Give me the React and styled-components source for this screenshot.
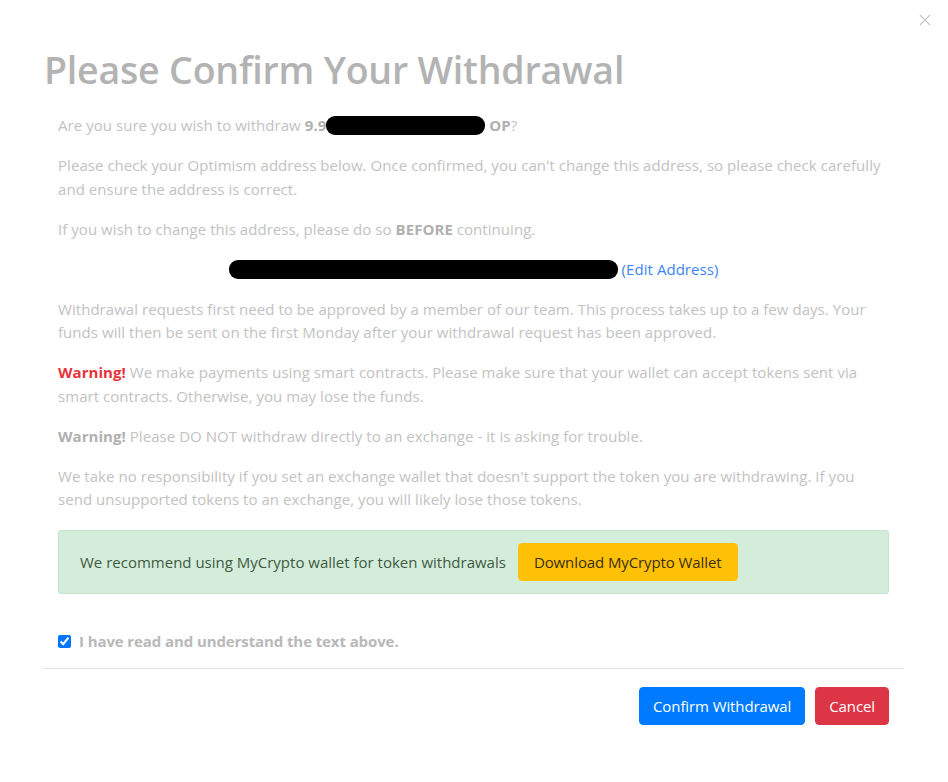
import React, { useState } from 'react'
import styled, { createGlobalStyle } from 'styled-components'

const GlobalStyle = createGlobalStyle`
  body {
    margin: 0;
    background: #ffffff;
    font-family: "Open Sans", "Noto Sans", sans-serif;
  }
`

const Page = styled.div`
  width: 948px;
  height: 782px;
  overflow: hidden;
  display: flex;
  justify-content: flex-start;
  padding: 0 0 0 43px;
  box-sizing: border-box;
  position: relative;
`

const Modal = styled.div`
  width: 861px;
  display: flex;
  flex-direction: column;
`

const CloseButton = styled.button`
  position: absolute;
  top: 12px;
  right: 14px;
  width: 18px;
  height: 18px;
  padding: 0;
  border: none;
  background: none;
  color: #c8c8c8;
  cursor: pointer;
`

const Header = styled.div`
  padding: 44px 0 0 1px;
`

const Title = styled.h1`
  margin: 0;
  font-size: 37.5px;
  font-weight: 600;
  line-height: 52px;
  color: #b3b3b3;
  letter-spacing: -0.2px;
`

const Body = styled.div`
  padding: 18px 15px 0;
`

const Text = styled.p`
  margin: 0 0 16.5px;
  font-size: 15px;
  line-height: 23.5px;
  color: #c2c2c2;
  letter-spacing: 0.05px;
  text-align: ${(p) => (p.$center ? 'center' : 'left')};
`

const Strong = styled.b`
  font-weight: 700;
  color: ${(p) => p.$color || '#b0b0b0'};
`

const Redacted = styled.span`
  display: inline-block;
  vertical-align: -4px;
  width: ${(p) => p.$w}px;
  height: 19px;
  background: #000;
  border-radius: 9px;
  margin-right: ${(p) => p.$gap || 0}px;
`

const Link = styled.a`
  color: #3d85f5;
  text-decoration: none;
  cursor: pointer;
`

const Alert = styled.div`
  display: flex;
  align-items: center;
  gap: 12px;
  height: 64px;
  margin-top: 18.5px;
  padding: 0 21px;
  box-sizing: border-box;
  background: #d4edda;
  border: 1px solid #c3e6cb;
  border-radius: 3px;
  color: #3f5a45;
  font-size: 15px;
`

const Button = styled.button`
  height: 38px;
  padding: 0 ${(p) => p.$pad || 13}px;
  border: 1px solid ${(p) => p.$bg};
  border-radius: 4px;
  background: ${(p) => p.$bg};
  color: ${(p) => p.$fg};
  font-family: inherit;
  font-size: 15px;
  letter-spacing: -0.1px;
  cursor: pointer;
`

const CheckRow = styled.label`
  display: flex;
  align-items: center;
  gap: 8px;
  margin: 37px 0 17px;
  font-size: 15px;
  font-weight: 700;
  color: #b8b8b8;
  letter-spacing: -0.1px;
  cursor: pointer;

  input {
    margin: 0;
    width: 13px;
    height: 13px;
    accent-color: #0075ff;
  }
`

const Divider = styled.hr`
  margin: 0;
  border: none;
  border-top: 1px solid #e2e2e2;
`

const Footer = styled.div`
  display: flex;
  justify-content: flex-end;
  gap: 10px;
  padding: 18px 15px 0;
`

export default function App() {
  const [agreed, setAgreed] = useState(true)

  return (
    <Page>
      <GlobalStyle />
      <CloseButton aria-label="Close">
        <svg width="14" height="14" viewBox="0 0 14 14">
          <path d="M2 2 L12 12 M12 2 L2 12" stroke="currentColor" strokeWidth="1.3" />
        </svg>
      </CloseButton>
      <Modal>
        <Header>
          <Title>Please Confirm Your Withdrawal</Title>
        </Header>
        <Body>
          <Text>
            Are you sure you wish to withdraw <Strong>9.9</Strong>
            <Redacted $w={159} $gap={4} />
            <Strong>OP</Strong>?
          </Text>
          <Text>
            Please check your Optimism address below. Once confirmed, you can't change this address, so please check carefully
            <br />
            and ensure the address is correct.
          </Text>
          <Text>
            If you wish to change this address, please do so <Strong>BEFORE</Strong> continuing.
          </Text>
          <Text $center>
            <Redacted $w={389} $gap={4} />
            <Link>(Edit Address)</Link>
          </Text>
          <Text>
            Withdrawal requests first need to be approved by a member of our team. This process takes up to a few days. Your
            <br />
            funds will then be sent on the first Monday after your withdrawal request has been approved.
          </Text>
          <Text>
            <Strong $color="#e8333c">Warning!</Strong> We make payments using smart contracts. Please make sure that your wallet can accept tokens sent via
            <br />
            smart contracts. Otherwise, you may lose the funds.
          </Text>
          <Text>
            <Strong>Warning!</Strong> Please DO NOT withdraw directly to an exchange - it is asking for trouble.
          </Text>
          <Text>
            We take no responsibility if you set an exchange wallet that doesn't support the token you are withdrawing. If you
            <br />
            send unsupported tokens to an exchange, you will likely lose those tokens.
          </Text>
          <Alert>
            We recommend using MyCrypto wallet for token withdrawals
            <Button $bg="#ffc107" $fg="#3a2f10" $pad={15}>Download MyCrypto Wallet</Button>
          </Alert>
          <CheckRow>
            <input type="checkbox" checked={agreed} onChange={(e) => setAgreed(e.target.checked)} />
            I have read and understand the text above.
          </CheckRow>
        </Body>
        <Divider />
        <Footer>
          <Button $bg="#007bff" $fg="#ffffff">Confirm Withdrawal</Button>
          <Button $bg="#dc3545" $fg="#ffffff">Cancel</Button>
        </Footer>
      </Modal>
    </Page>
  )
}
